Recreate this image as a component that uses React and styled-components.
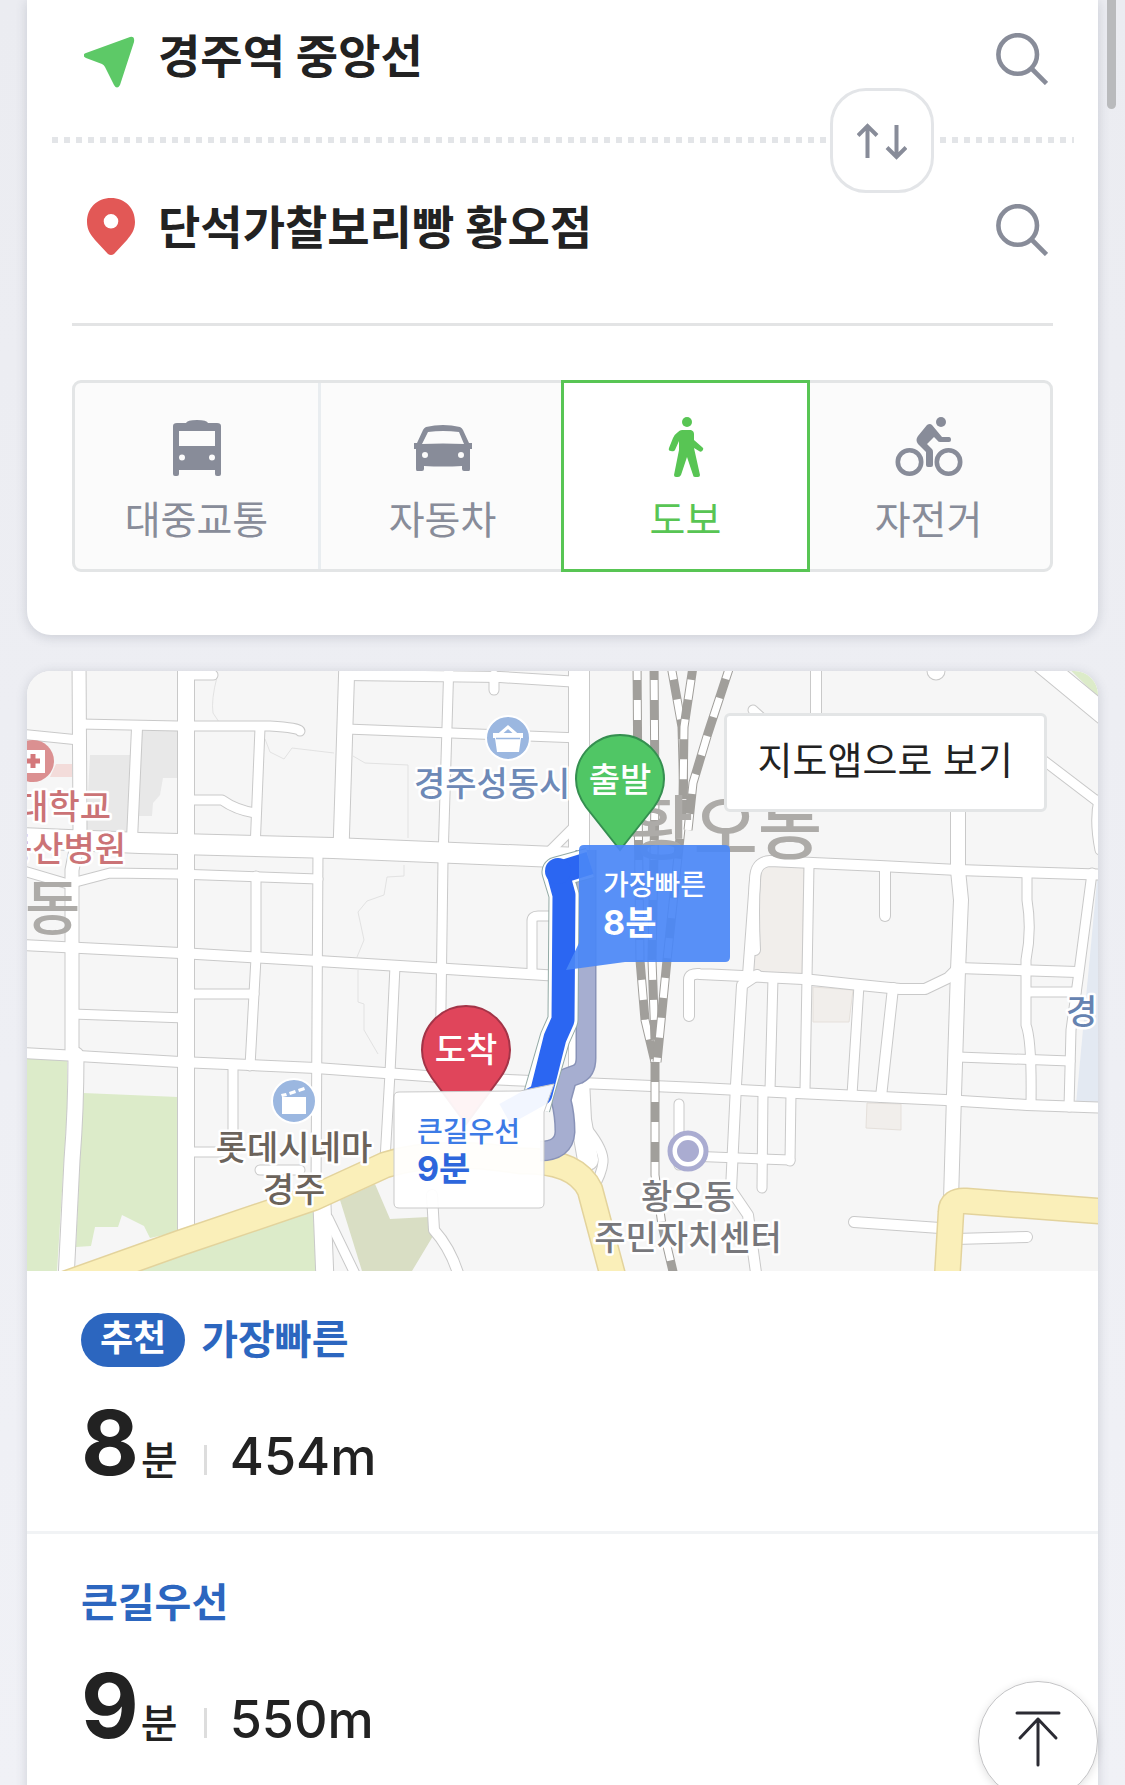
import React, { useState } from "react";
import styled, { createGlobalStyle } from "styled-components";

const GlobalStyle = createGlobalStyle`
  * {
    box-sizing: border-box;
  }

  body {
    margin: 0;
    background: #edeef3;
    color: #222;
    font-family: "Inter", "Noto Sans CJK KR", sans-serif;
  }

  button, input {
    margin: 0;
    padding: 0;
    border: none;
    background: none;
    color: inherit;
    font-family: inherit;
  }

  button {
    cursor: pointer;
  }

  h3, p {
    margin: 0;
  }
`;

const Page = styled.div`
  position: relative;
  display: flex;
  flex-direction: column;
  gap: 36px;
  min-height: 100vh;
  padding: 0 27px;
  overflow: hidden;
  background: linear-gradient(#ebecf1, #f0f1f6);
`;

const Card = styled.section`
  background: #fff;
  box-shadow: 0 2px 12px rgba(60, 70, 90, 0.2);
`;

const SearchCard = styled(Card)`
  border-radius: 0 0 24px 24px;
  padding-bottom: 63px;
`;

const ResultCard = styled(Card)`
  flex: 1;
  border-radius: 24px 24px 0 0;
`;

const PlaceRow = styled.label`
  display: flex;
  align-items: center;
  gap: 22px;
  height: 118px;
  padding: 0 50px 0 57px;
`;

const PlaceInput = styled.input`
  flex: 1;
  min-width: 0;
  height: 72px;
  padding-bottom: 12px;
  font-size: 46px;
  font-weight: 700;
  outline: none;
`;

const IconButton = styled.button`
  display: flex;
`;

const DottedLine = styled.div`
  position: relative;
  height: 6px;
  margin: 19px 24px 28px 25px;
  background: repeating-linear-gradient(90deg, #e3e5e8 0 6px, #fff 6px 12px);
`;

const SwapButton = styled.button`
  position: absolute;
  right: 140px;
  top: -49px;
  display: flex;
  align-items: center;
  justify-content: center;
  width: 104px;
  height: 105px;
  border: 3px solid #e3e5e8;
  border-radius: 36px;
  background: #fff;
  box-shadow: 0 0 0 4px #fff;
`;

const Divider = styled.hr`
  height: 3px;
  margin: 34px 45px 54px;
  border: none;
  background: #e3e4e5;
`;

const Tabs = styled.div`
  display: flex;
  margin: 0 45px;
  border: 3px solid #e3e5e6;
  border-radius: 9px;
  background: #fbfbfb;
`;

const Tab = styled.button`
  flex: 1 1 0;
  display: flex;
  flex-direction: column;
  align-items: center;
  gap: 19px;
  height: 186px;
  padding-top: 34px;
  border-left: ${(props) => (props.$line ? "3px solid #e9edf0" : "none")};
  color: #888c99;
  font-size: 39px;
  line-height: 48px;

  &[aria-pressed="true"] {
    height: 192px;
    margin: -3px;
    border: 3px solid #58c554;
    background: #fff;
    color: #58c554;
  }
`;

const MapArea = styled.div`
  position: relative;
  height: 600px;
  overflow: hidden;
  border-radius: 24px 24px 0 0;
  background: #f6f6f6;

  svg {
    display: block;
    width: 100%;
    height: 100%;
  }
`;

const MapAppButton = styled.button`
  position: absolute;
  top: 42px;
  right: 51px;
  height: 99px;
  padding: 0 31px 10px;
  border: 3px solid #e3e5e6;
  border-radius: 6px;
  background: #fff;
  font-size: 38px;
`;

const MapLabel = styled.text`
  fill: ${(props) => props.$color};
  font-size: ${(props) => props.$size || 34}px;
  font-weight: 500;
  text-anchor: ${(props) => props.$anchor || "middle"};
  stroke: ${(props) => (props.$plain ? "none" : "#fff")};
  stroke-width: 5px;
  stroke-linejoin: round;
  paint-order: stroke;
`;

const AreaLabel = styled.text`
  fill: #adaba8;
  font-size: ${(props) => props.$size}px;
  font-weight: 500;
`;

const CalloutText = styled.text`
  fill: ${(props) => props.$color};
  font-size: ${(props) => (props.$strong ? 34 : 28)}px;
  font-weight: ${(props) => (props.$strong ? 700 : 500)};
`;

const RouteItem = styled.article`
  padding: 42px 54px 24px;
  border-bottom: 3px solid #f1f3f5;

  &:last-child {
    border-bottom: none;
  }
`;

const RouteTitle = styled.h3`
  display: flex;
  align-items: center;
  gap: 16px;
  height: 54px;
  color: #2c66bf;
  font-size: 40px;
  font-weight: 700;
  line-height: 54px;
`;

const Badge = styled.span`
  height: 54px;
  padding: 0 19px;
  border-radius: 27px;
  background: #2c66bf;
  color: #fff;
  font-size: 36px;
  line-height: 51px;
`;

const RouteInfo = styled.p`
  display: flex;
  align-items: baseline;
  margin-top: 30px;
  line-height: 92px;
`;

const Minutes = styled.strong`
  font-size: 89px;
  font-weight: 700;
`;

const Unit = styled.span`
  margin-left: 2px;
  font-size: 40px;
  font-weight: 500;
`;

const Bar = styled.span`
  width: 3px;
  height: 30px;
  margin: 0 23px 0 26px;
  background: #ddd;
`;

const Distance = styled.span`
  font-size: 52px;
  font-weight: 500;
`;

const TopButton = styled.button`
  position: fixed;
  right: 27px;
  bottom: -16px;
  display: flex;
  align-items: center;
  justify-content: center;
  width: 120px;
  height: 120px;
  padding-bottom: 4px;
  border: 1px solid #c4c4c6;
  border-radius: 50%;
  background: #fff;
  box-shadow: 0 2px 8px rgba(0, 0, 0, 0.12);
`;

const ScrollThumb = styled.div`
  position: fixed;
  top: 0;
  right: 9px;
  width: 9px;
  height: 109px;
  border-radius: 0 0 5px 5px;
  background: #b9babc;
`;

const StartIcon = () => (
  <svg width="52" height="58" viewBox="1 -6 52 58" aria-hidden="true">
    <path
      d="M3 17 47 1Q52 0 51 6L37 49Q34 54 31 49L22 31Q21 29 19 28L3 22Q-2 19 3 17Z"
      fill="#5dc967"
    />
  </svg>
);

const GoalIcon = () => (
  <svg width="52" height="64" viewBox="-1 0 52 64" aria-hidden="true">
    <path
      fillRule="evenodd"
      d="M26 0C12 0 2 10 2 24c0 8 4 13 8 18l13 14q3 2 6 0l13-14c4-5 8-10 8-18C50 10 40 0 26 0Zm0 16a7.300 7.300 0 1 1 0 14.600 7.300 7.300 0 0 1 0-14.600Z"
      fill="#e25856"
    />
  </svg>
);

const SearchIcon = () => (
  <svg width="52" height="52" viewBox="0 0 52 52" fill="none" stroke="#888c99" strokeWidth="4.600" aria-hidden="true">
    <circle cx="21.700" cy="21.500" r="19.300" />
    <path d="m36 36 14.500 14.500" />
  </svg>
);

const SwapIcon = () => (
  <svg width="50" height="38" viewBox="0 0 50 38" fill="none" stroke="#888c99" strokeWidth="4" aria-hidden="true">
    <path d="M10.500 36V4M1 13.500 10.500 4l9.500 9.500M39.500 3v32M30 25.500l9.500 9.500 9.500-9.500" />
  </svg>
);

const BusIcon = () => (
  <svg width="68" height="60" viewBox="0 0 68 60" fill="currentColor" aria-hidden="true">
    <path
      fillRule="evenodd"
      d="M10 9q0-3 4-3h9q1-3 11-3t11 3h9q4 0 4 3v48q0 2-2 2h-2q-2 0-2-2v-4H16v4q0 2-2 2h-2q-2 0-2-2ZM16 14v15h36V14ZM19 37.500a3 3 0 1 0 0 6 3 3 0 0 0 0-6Zm30 0a3 3 0 1 0 0 6 3 3 0 0 0 0-6Z"
    />
  </svg>
);

const CarIcon = () => (
  <svg width="68" height="60" viewBox="0 0 68 60" fill="currentColor" aria-hidden="true">
    <path
      fillRule="evenodd"
      d="M17 10q17-4 34 0 2 1 3 3l6 13h3v6h-2v20q0 2-1 2h-5q-2 0-2-2v-3q-19 1-38 0v3q0 2-2 2H8q-1 0-1-2V32H5v-6h3l6-13q1-2 3-3Zm2 5-6 12q21-1 42 0l-5-12q-16-2-31 0Zm-3 20a3 3 0 1 0 0 6 3 3 0 0 0 0-6Zm36 0a3 3 0 1 0 0 6 3 3 0 0 0 0-6Z"
    />
  </svg>
);

const WalkIcon = () => (
  <svg width="68" height="60" viewBox="0 0 68 60" fill="currentColor" aria-hidden="true">
    <circle cx="35" cy="5" r="5" />
    <path d="M30 13h9q3 1 3 4v6l8 7q2 1 1 3-2 3-4 1l-5-3 6 27q0 2-2 2h-3q-2 0-2-2l-6-18-6 18q-1 2-3 2h-2q-2 0-2-2l5-25V24l-4 9q-1 2-4 1-3 0-2-3l4-10q2-4 5-6 2-2 4-2Z" />
  </svg>
);

const BikeIcon = () => (
  <svg width="68" height="60" viewBox="0 0 68 60" fill="currentColor" aria-hidden="true">
    <circle cx="46" cy="5" r="5" />
    <g fill="none" stroke="currentColor" strokeWidth="4.600">
      <circle cx="14.500" cy="45" r="11.700" />
      <circle cx="53.500" cy="45" r="11.700" />
    </g>
    <path d="M32 8q3-2 5 0l10 12h7q2 0 2 3 0 2-2 2h-9q-2 0-3-2l-3-3-7 7 5 5q1 1 1 3v13q0 2-2 2h-3q-2 0-2-2V35l-8-8q-3-4 0-8Z" />
  </svg>
);

const TopIcon = () => (
  <svg width="46" height="56" viewBox="0 0 46 56" fill="none" stroke="#2b2b33" strokeWidth="3" strokeLinecap="round" strokeLinejoin="round" aria-hidden="true">
    <path d="M2 2h42M23 8v46M5 27 23 8l18 19" />
  </svg>
);

// [path, width]
const roads = [
  ["M79 660 80 830 72 870V1050", 13],
  ["M76 1055Q76 1110 72 1160L66 1280", 15],
  ["M186 660V1240", 16],
  ["M137 728 132 840", 10],
  ["M260 728 255 850", 9],
  ["M256 876V958L250 1066", 9],
  ["M233 1066V1150", 9],
  ["M190 1152H230", 9],
  ["M347 660 341 850", 15],
  ["M318 850 316 1190", 9],
  ["M395 966 390 1073 385 1160", 9],
  ["M449 660 443 860 440 1078", 9],
  ["M579 660V1080L581 1120 588 1160", 20],
  ["M532 972V921Q532 916 538 916H552", 9],
  ["M494 675V690", 9],
  ["M188 675H213", 9],
  ["M20 734 79 740", 9],
  ["M80 724 178 726 270 726Q300 728 300 731", 9],
  ["M346 675 500 677 580 682", 10],
  ["M346 729 580 738", 9],
  ["M186 800H222Q236 810 255 813", 9],
  ["M20 838 140 843 333 848 579 858", 20],
  ["M545 856 575 826", 9],
  ["M20 870 68 884 110 873 178 874 318 879", 9],
  ["M20 945 180 953 318 961 400 966 560 976", 10],
  ["M72 1014 186 1018", 9],
  ["M186 994H254", 9],
  ["M20 1053 78 1056 180 1062 316 1068 440 1077 580 1083 700 1088 797 1093 945 1100 1027 1105 1110 1108", 10],
  ["M757 975 742 985 736 1085 731 1190 748 1215 757 1280", 10],
  ["M755 950Q753 910 755 880 755 862 770 861L813 863 880 866 958 870 1110 875", 10],
  ["M755 880 748 975", 10],
  ["M816 660V740", 10],
  ["M809 865 805 1090", 9],
  ["M791 1093 790 1161", 9],
  ["M958 780V870L961 900 958 970 954 1095 951 1200", 14],
  ["M885 868V916", 10],
  ["M1027 873V900Q1032 930 1026 960V1025Q1032 1040 1031 1105", 9],
  ["M1092 873 1079 972 1071 1030 1069 1107", 9],
  ["M773 978 770 1090M763 1092 762 1188", 9],
  ["M859 985 852 1095", 9],
  ["M893 988 881 1097", 10],
  ["M689 1016V980Q689 973 700 974L803 979 850 984 900 989H925L948 978 958 968 1077 972", 10],
  ["M958 1057 1070 1061", 9],
  ["M1028 992H1076", 9],
  ["M679 1104V1165M688 1156 790 1160", 9],
  ["M1038 660 1112 721", 20],
  ["M1030 750 1098 802", 9],
  ["M1099 800Q1094 820 1100 850", 9],
  ["M936 665V671", 17],
  ["M753 710 775 730", 9],
  ["M322 1205 325 1280", 17],
  ["M328 1218 358 1280", 9],
  ["M432 1195 434 1230Q452 1250 460 1280", 10],
  ["M588 1130Q604 1150 603 1162T592 1190", 9],
  ["M854 1222 940 1228", 10],
  ["M955 1239 1027 1237", 10],
  ["M260 1170H300", 9],
];

const yellowRoads = [
  "M20 1300 180 1243 313 1198 385 1165Q440 1148 520 1161 576 1160 590 1190L614 1280",
  "M947 1280 951 1212Q951 1200 966 1201L1110 1212",
];

const rails = [
  "M637 660 638 800 640 960 645 1020 655 1062",
  "M654 660 655 800 652 960 655 1040",
  "M670 660 682 727 684 800 667 960 657 1062",
  "M694 660 684 727 683 800",
  "M732 660 708 733 693 783 688 830",
  "M655 1062V1175L662 1225 675 1280",
];

const RouteMap = () => (
  <svg viewBox="27 671 1071 600" preserveAspectRatio="xMidYMid slice" role="img" aria-label="경로 지도">
    <g fill="#e8e8e8">
      <path d="M90 755h40l-3 77H86Z" />
      <path d="M142 731h36v47h-15l-3 17-7 8-1 13h-14Z" />
    </g>
    <g fill="#f1eeeb" stroke="#e5e0db">
      <path d="M762 866h42l-2 108-50-2Z" />
      <path d="M813 987l40 3-4 32h-36Z" />
      <path d="M867 1103l34 1v26l-35-2Z" />
    </g>
    <path d="M1098 870 1076 1104H1098Z" fill="#e3e9f2" />
    <path d="M56 764h16v13H50Z" fill="#f3dcda" />
    <g fill="#dcebc9">
      <path d="M27 1059h40v52l-10 160H27Z" />
      <path d="M83 1093 178 1097V1232L150 1238 144 1226 122 1215 118 1227H95L91 1246 76 1247Z" />
      <path d="M130 1271 313 1210 317 1271Z" />
      <path d="M1060 660 1098 697V660Z" />
    </g>
    <path d="M340 1200 375 1184 390 1219 428 1217 433 1236 412 1271H362Z" fill="#d9dec4" />

    <g fill="none" stroke="#e2e2e2">
      <path d="M217 677Q211 700 213 713L219 722M265 739 270 752 284 759 292 748 334 753" />
      <path d="M353 756 365 763 408 765V838M404 865V876L387 877 384 895 367 901 358 912 364 940 357 957M358 970V1002L364 1004V1030L378 1054" />
    </g>
    <g fill="none" stroke="#c9c9c9" strokeLinecap="round" strokeLinejoin="round">
      {roads.map(([d, width]) => (
        <path key={d} d={d} strokeWidth={width + 2} />
      ))}
    </g>
    <g fill="none" stroke="#fff" strokeLinecap="round" strokeLinejoin="round">
      {roads.map(([d, width]) => (
        <path key={d} d={d} strokeWidth={width} />
      ))}
    </g>
    <g fill="none" strokeLinejoin="round">
      {yellowRoads.map((d) => (
        <path key={d} d={d} stroke="#e3d39c" strokeWidth="27" />
      ))}
      {yellowRoads.map((d) => (
        <path key={d} d={d} stroke="#faefb9" strokeWidth="24" />
      ))}
    </g>
    <g fill="none">
      {rails.map((d, index) => (
        <g key={d}>
          <path d={d} stroke="#a19f9b" strokeWidth="9" />
          <path d={d} stroke="#fff" strokeWidth="7" strokeDasharray="20 20" strokeDashoffset={index * 20} />
        </g>
      ))}
    </g>

    <AreaLabel x="25" y="930" $size="60">동</AreaLabel>
    <AreaLabel x="629" y="854" $size="70">황오동</AreaLabel>

    <circle cx="33" cy="761" r="21" fill="#db9091" />
    <path d="M22 750h23v23H22Z" fill="#fff" />
    <path d="M33 754v14M26 761h14" stroke="#d4787b" strokeWidth="5" />
    <MapLabel x="111" y="819" $color="#cb7376" $anchor="end">대학교</MapLabel>
    <MapLabel x="126" y="861" $color="#cb7376" $anchor="end">동산병원</MapLabel>

    <circle cx="508" cy="738" r="22" fill="#9bb7e0" stroke="#fff" strokeWidth="2" />
    <path d="M493 733h30v5h-2l-2 14h-22l-2-14h-2Z" fill="#fff" />
    <path d="m500 734 8-7 8 7" fill="none" stroke="#fff" strokeWidth="3" />
    <path d="M496 738.500h24" stroke="#9bb7e0" strokeWidth="1.500" />
    <MapLabel x="414" y="796" $color="#6d89b7" $anchor="start">경주성동시</MapLabel>

    <circle cx="294" cy="1101" r="22" fill="#9bb7e0" stroke="#fff" strokeWidth="2" />
    <path d="M282 1097h24v17h-24Zm-1-3 5-1 1 3-5 1Zm8-2 6-2 1 3-6 2Zm9-3 6-2 1 3-6 2Z" fill="#fff" />
    <MapLabel x="294" y="1160" $color="#6b635b">롯데시네마</MapLabel>
    <MapLabel x="294" y="1202" $color="#6b635b">경주</MapLabel>

    <circle cx="688" cy="1151" r="18" fill="#fff" stroke="#aaacd1" strokeWidth="5" />
    <circle cx="688" cy="1151" r="11" fill="#aaacd1" />
    <MapLabel x="688" y="1209" $color="#77777b">황오동</MapLabel>
    <MapLabel x="688" y="1250" $color="#77777b">주민자치센터</MapLabel>
    <MapLabel x="1066" y="1024" $color="#6683b1" $anchor="start">경</MapLabel>

    <g fill="none" strokeLinejoin="round">
      <path d="M586 850V1058Q586 1070 578 1074L567 1078 561 1100Q565 1115 565 1132 564 1151 540 1151" stroke="#8993b8" strokeWidth="21" />
      <path d="M586 850V1058Q586 1070 578 1074L567 1078 561 1100Q565 1115 565 1132 564 1151 540 1151" stroke="#a6aed0" strokeWidth="18" />
      <path d="M590 863 557 872 564 895 563 1020 555 1038 540 1090 535 1108" stroke="#93aaa5" strokeWidth="31" />
      <path d="M590 863 557 872 564 895 563 1020 555 1038 540 1090 535 1108" stroke="#fff" strokeWidth="29" />
      <path d="M590 863 558 873 564 895 563 1020 555 1038 541 1094 505 1114" stroke="#2b66f2" strokeWidth="23" />
      <path d="M558 871Z" stroke="#2b66f2" strokeWidth="26" strokeLinecap="round" />
    </g>

    <path d="M620 850 586 807Q576 793 576 779A44 44 0 0 1 664 779Q664 793 654 807Z" fill="#50c665" stroke="#358f50" strokeWidth="2" />
    <MapLabel x="620" y="792" $color="#fff" $plain>출발</MapLabel>
    <path d="M466 1124 432 1078Q422 1064 422 1050A44 44 0 0 1 510 1050Q510 1064 500 1078Z" fill="#e0455b" stroke="#a33447" strokeWidth="2" />
    <MapLabel x="466" y="1062" $color="#fff" $plain>도착</MapLabel>

    <path d="M584 845H725Q730 845 730 850V957Q730 962 725 962H625L566 970 579 943V850Q579 845 584 845Z" fill="#4a87f6" fillOpacity="0.920" />
    <CalloutText x="603" y="895" $color="#fff">가장빠른</CalloutText>
    <CalloutText x="603" y="935" $color="#fff" $strong>8분</CalloutText>
    <path d="M399 1092 520 1091 554 1084 544 1112V1203Q544 1208 539 1208H399Q394 1208 394 1203V1097Q394 1092 399 1092Z" fill="#fff" fillOpacity="0.940" stroke="#c9c9c9" />
    <CalloutText x="417" y="1142" $color="#3c7be6">큰길우선</CalloutText>
    <CalloutText x="417" y="1181" $color="#2d66dc" $strong>9분</CalloutText>
  </svg>
);

const modes = [
  { id: "transit", label: "대중교통", icon: BusIcon },
  { id: "car", label: "자동차", icon: CarIcon },
  { id: "walk", label: "도보", icon: WalkIcon },
  { id: "bike", label: "자전거", icon: BikeIcon },
];

const routes = [
  { title: "가장빠른", minutes: 8, distance: "454m", recommended: true },
  { title: "큰길우선", minutes: 9, distance: "550m" },
];

const App = () => {
  const [mode, setMode] = useState("walk");
  const [start, setStart] = useState("경주역 중앙선");
  const [goal, setGoal] = useState("단석가찰보리빵 황오점");

  const swap = () => {
    setStart(goal);
    setGoal(start);
  };

  return (
    <Page>
      <GlobalStyle />
      <SearchCard>
        <PlaceRow>
          <StartIcon />
          <PlaceInput aria-label="출발지" value={start} onChange={(e) => setStart(e.target.value)} />
          <IconButton type="button" aria-label="출발지 검색">
            <SearchIcon />
          </IconButton>
        </PlaceRow>
        <DottedLine>
          <SwapButton type="button" aria-label="출발지 도착지 바꾸기" onClick={swap}>
            <SwapIcon />
          </SwapButton>
        </DottedLine>
        <PlaceRow>
          <GoalIcon />
          <PlaceInput aria-label="도착지" value={goal} onChange={(e) => setGoal(e.target.value)} />
          <IconButton type="button" aria-label="도착지 검색">
            <SearchIcon />
          </IconButton>
        </PlaceRow>
        <Divider />
        <Tabs>
          {modes.map(({ id, label, icon: Icon }) => (
            <Tab
              key={id}
              type="button"
              $line={id === "car"}
              aria-pressed={mode === id}
              onClick={() => setMode(id)}
            >
              <Icon />
              {label}
            </Tab>
          ))}
        </Tabs>
      </SearchCard>

      <ResultCard>
        <MapArea>
          <RouteMap />
          <MapAppButton type="button">지도앱으로 보기</MapAppButton>
        </MapArea>
        {routes.map((route) => (
          <RouteItem key={route.title}>
            <RouteTitle>
              {route.recommended && <Badge>추천</Badge>}
              {route.title}
            </RouteTitle>
            <RouteInfo>
              <Minutes>{route.minutes}</Minutes>
              <Unit>분</Unit>
              <Bar />
              <Distance>{route.distance}</Distance>
            </RouteInfo>
          </RouteItem>
        ))}
      </ResultCard>

      <TopButton type="button" aria-label="맨 위로">
        <TopIcon />
      </TopButton>
      <ScrollThumb />
    </Page>
  );
};

export default App;
